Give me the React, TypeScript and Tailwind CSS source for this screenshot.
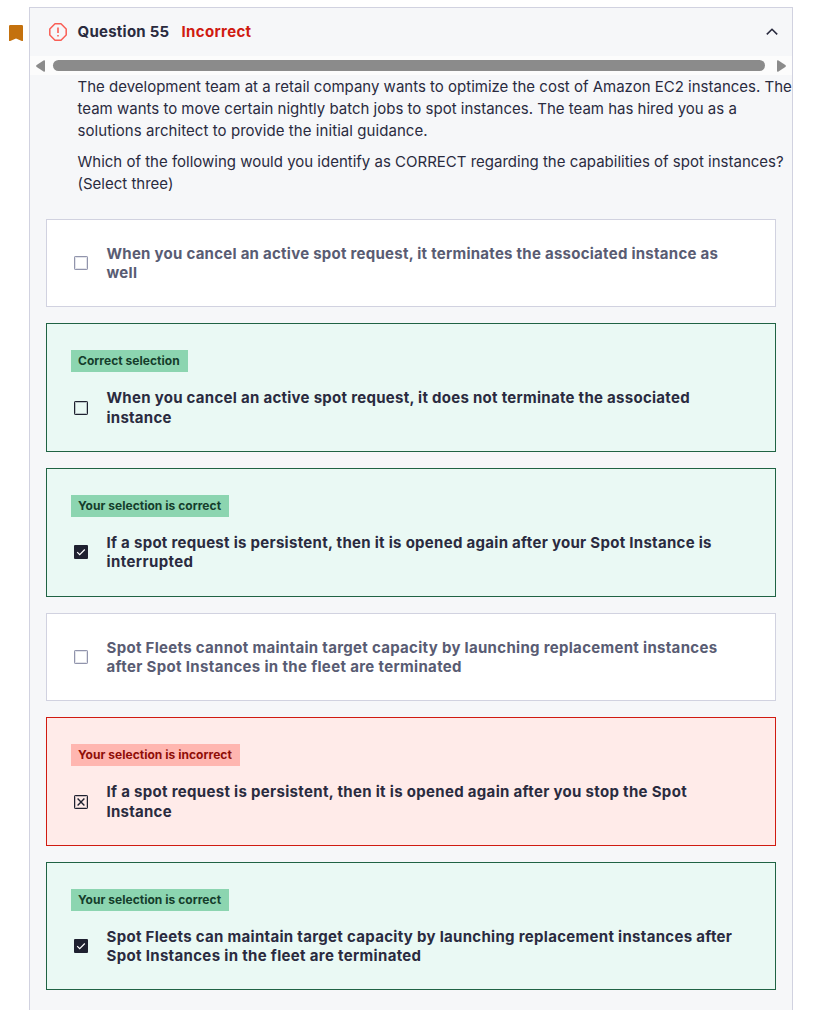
import React from "react";

type Status = "neutral" | "missed" | "correct" | "incorrect";

interface Line {
  text: string;
  spacing: string;
}

interface Answer {
  status: Status;
  badge?: string;
  height: string;
  offset: string;
  boxOffset: string;
  leading: string;
  lines: Line[];
}

const cardStyles: Record<Status, string> = {
  neutral: "bg-white border-[#d1d2e0] text-[#595c73]",
  missed: "bg-[#eaf9f4] border-[#206344] text-[#2a2b3f]",
  correct: "bg-[#eaf9f4] border-[#206344] text-[#2a2b3f]",
  incorrect: "bg-[#ffebe9] border-[#d01b11] text-[#2a2b3f]",
};

const answers: Answer[] = [
  {
    status: "neutral", height: "h-[88px]", offset: "pt-6", boxOffset: "mt-3", leading: "leading-[19px]",
    lines: [
      { text: "When you cancel an active spot request, it terminates the associated instance as", spacing: "tracking-[0.26px]" },
      { text: "well", spacing: "tracking-[0.3px]" },
    ],
  },
  {
    status: "missed", badge: "Correct selection", height: "h-[129px]", offset: "pt-[26px]", boxOffset: "mt-[13px]", leading: "leading-5",
    lines: [
      { text: "When you cancel an active spot request, it does not terminate the associated", spacing: "tracking-[0.28px]" },
      { text: "instance", spacing: "tracking-[0.25px]" },
    ],
  },
  {
    status: "correct", badge: "Your selection is correct", height: "h-[129px]", offset: "pt-[26px]", boxOffset: "mt-3", leading: "leading-[19px]",
    lines: [
      { text: "If a spot request is persistent, then it is opened again after your Spot Instance is", spacing: "tracking-[0.29px]" },
      { text: "interrupted", spacing: "tracking-[0.4px]" },
    ],
  },
  {
    status: "neutral", height: "h-[88px]", offset: "pt-6", boxOffset: "mt-3", leading: "leading-[19px]",
    lines: [
      { text: "Spot Fleets cannot maintain target capacity by launching replacement instances", spacing: "tracking-[0.305px]" },
      { text: "after Spot Instances in the fleet are terminated", spacing: "tracking-[0.34px]" },
    ],
  },
  {
    status: "incorrect", badge: "Your selection is incorrect", height: "h-[129px]", offset: "pt-[26px]", boxOffset: "mt-[13px]", leading: "leading-5",
    lines: [
      { text: "If a spot request is persistent, then it is opened again after you stop the Spot", spacing: "tracking-[0.315px]" },
      { text: "Instance", spacing: "tracking-[0.25px]" },
    ],
  },
  {
    status: "correct", badge: "Your selection is correct", height: "h-[128px]", offset: "pt-[26px]", boxOffset: "mt-3", leading: "leading-[19px]",
    lines: [
      { text: "Spot Fleets can maintain target capacity by launching replacement instances after", spacing: "tracking-[0.305px]" },
      { text: "Spot Instances in the fleet are terminated", spacing: "tracking-[0.33px]" },
    ],
  },
];

const prompt: Line[][] = [
  [
    { text: "The development team at a retail company wants to optimize the cost of Amazon EC2 instances. The", spacing: "tracking-normal" },
    { text: "team wants to move certain nightly batch jobs to spot instances. The team has hired you as a", spacing: "tracking-normal" },
    { text: "solutions architect to provide the initial guidance.", spacing: "tracking-[0.06px]" },
  ],
  [
    { text: "Which of the following would you identify as CORRECT regarding the capabilities of spot instances?", spacing: "tracking-normal" },
    { text: "(Select three)", spacing: "tracking-normal" },
  ],
];

function Checkbox({ status }: { status: Status }) {
  if (status === "correct") {
    return (
      <svg width="14" height="14" viewBox="0 0 14 14" fill="none">
        <rect width="14" height="14" rx="1" fill="#1f2130" />
        <path d="M3.2 7.1 5.7 9.6 10.8 4.5" stroke="#fff" strokeWidth="1.2" />
      </svg>
    );
  }
  const stroke = status === "neutral" ? "#9194ac" : "#1f2130";
  return (
    <svg width="14" height="14" viewBox="0 0 14 14" fill="none">
      <rect x="0.5" y="0.5" width="13" height="13" rx="0.6" stroke={stroke} />
      <rect x="1.5" y="1.5" width="11" height="11" stroke={stroke} strokeOpacity="0.25" />
      {status === "incorrect" && (
        <path d="M3.6 3.6 10.4 10.4M10.4 3.6 3.6 10.4" stroke={stroke} strokeWidth="1.4" />
      )}
    </svg>
  );
}

function AnswerCard({ answer }: { answer: Answer }) {
  const badgeStyle =
    answer.status === "incorrect" ? "bg-[#ffb6b0] text-[#8f0e08]" : "bg-[#8cd5b0] text-[#153d2b]";
  return (
    <div className={`flex flex-col items-start border pl-6 ${answer.height} ${answer.offset} ${cardStyles[answer.status]}`}>
      {answer.badge && (
        <span className={`mb-4 h-[22px] pr-2 pl-[7px] text-[12px] leading-[22px] font-bold tracking-[0.04px] whitespace-nowrap ${badgeStyle}`}>
          {answer.badge}
        </span>
      )}
      <div className="flex">
        <div className={`mr-[18.5px] ml-[3px] shrink-0 ${answer.boxOffset}`}>
          <Checkbox status={answer.status} />
        </div>
        <div className={`text-[15px] font-bold ${answer.leading}`}>
          {answer.lines.map((l) => (
            <div key={l.text} className={`whitespace-nowrap ${l.spacing}`}>{l.text}</div>
          ))}
        </div>
      </div>
    </div>
  );
}

export default function App() {
  return (
    <div className="flex h-[1010px] w-[813px] overflow-hidden bg-white pt-[7px] font-['Inter','Liberation_Sans',sans-serif]">
      <div className="w-[29px] shrink-0 pt-[18px] pl-[9px]">
        <svg width="14" height="17" viewBox="0 0 14 17">
          <path d="M0 1.2Q0 0 1.2 0H12.8Q14 0 14 1.2V15.4Q14 16.4 12.8 16L7 13.6 1.2 16Q0 16.4 0 15.4Z" fill="#c4710d" />
        </svg>
      </div>
      <main className="w-[764px] border border-b-0 border-[#d1d2e0] bg-[#f6f7f9] text-[#2a2b3f]">
        <header className="flex h-12 items-center pr-[13px] pl-[19px] text-[15px] font-bold tracking-[0.25px]">
          <svg width="18" height="18" viewBox="0 0 18 18" fill="none" stroke="#f95e55" className="shrink-0">
            <path d="M6 .8H12L17.2 6V12L12 17.2H6L.8 12V6Z" strokeWidth="1.5" strokeLinejoin="round" />
            <path d="M9 4.5V10M9 12V13.5" strokeWidth="1.6" />
          </svg>
          <span className="ml-[10.5px] w-[104px] whitespace-nowrap">Question 55</span>
          <span className="tracking-[0.35px] text-[#d01b11]">Incorrect</span>
          <svg width="14" height="14" viewBox="0 0 14 14" fill="none" className="ml-auto">
            <path d="M1.8 9.4 7 4.3 12.2 9.4" stroke="#2a2b3f" strokeWidth="1.6" />
          </svg>
        </header>
        <div className="flex h-[19px] items-center bg-[#fcfcfc] pl-1.5">
          <svg width="9" height="12" viewBox="0 0 9 12"><path d="M9 1.2V10.8Q9 12.4 7.5 11.5L.7 7Q-.5 6 .7 5L7.5.5Q9-.4 9 1.2Z" fill="#8b8b8b" /></svg>
          <div className="mr-3 ml-2 h-[11px] w-[712px] rounded-full bg-[#8b8b8b]" />
          <svg width="9" height="12" viewBox="0 0 9 12"><path d="M0 1.2V10.8Q0 12.4 1.5 11.5L8.3 7Q9.5 6 8.3 5L1.5.5Q0-.4 0 1.2Z" fill="#8b8b8b" /></svg>
        </div>
        <section className="flex h-36 flex-col gap-[9px] pt-px pl-[47.5px] text-[15px] leading-[22px]">
          {prompt.map((lines, i) => (
            <div key={i}>
              {lines.map((l) => (
                <div key={l.text} className={`whitespace-nowrap ${l.spacing}`}>{l.text}</div>
              ))}
            </div>
          ))}
        </section>
        <section className="flex flex-col gap-4 px-4">
          {answers.map((a, i) => (
            <AnswerCard key={i} answer={a} />
          ))}
        </section>
      </main>
    </div>
  );
}
